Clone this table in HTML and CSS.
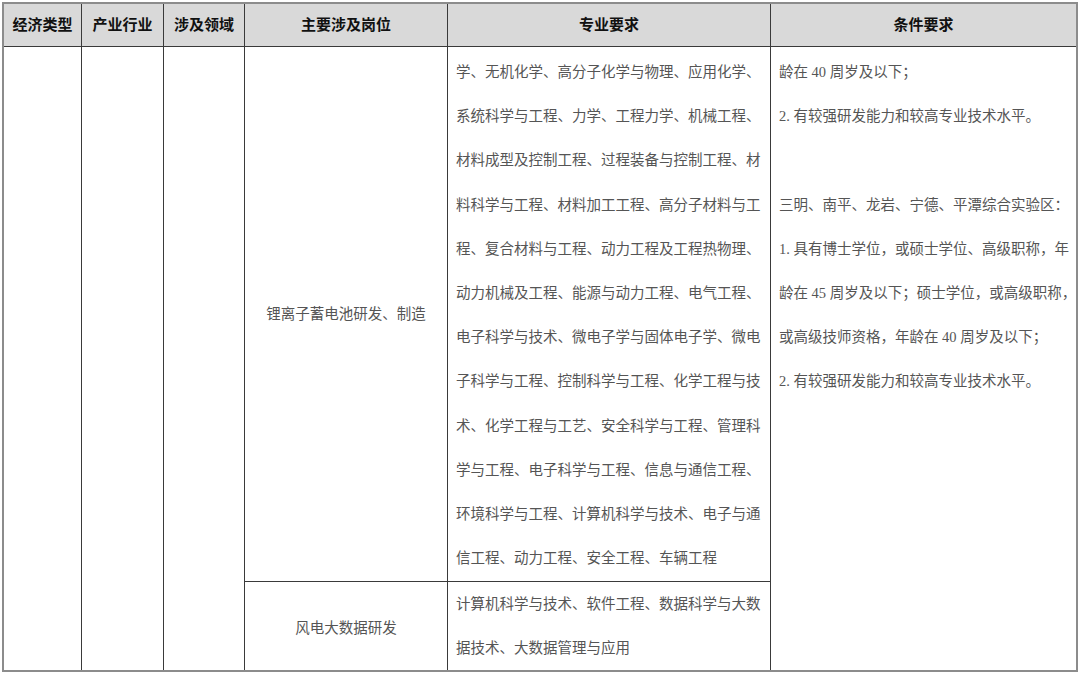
FILE: index.html
```html
<!DOCTYPE html>
<html lang="zh-CN">
<head>
<meta charset="utf-8">
<title>岗位需求表</title>
<link rel="stylesheet" href="styles.css">
</head>
<body>
<table class="req">
  <colgroup>
    <col class="c1"><col class="c2"><col class="c3"><col class="c4"><col class="c5"><col class="c6">
  </colgroup>
  <thead>
    <tr class="head">
      <th>经济类型</th>
      <th>产业行业</th>
      <th>涉及领域</th>
      <th>主要涉及岗位</th>
      <th>专业要求</th>
      <th class="last">条件要求</th>
    </tr>
  </thead>
  <tbody>
    <tr class="r1">
      <td rowspan="2"></td>
      <td rowspan="2"></td>
      <td rowspan="2"></td>
      <td class="post">锂离子蓄电池研发、制造</td>
      <td class="txt">学、无机化学、高分子化学与物理、应用化学、<br>系统科学与工程、力学、工程力学、机械工程、<br>材料成型及控制工程、过程装备与控制工程、材<br>料科学与工程、材料加工工程、高分子材料与工<br>程、复合材料与工程、动力工程及工程热物理、<br>动力机械及工程、能源与动力工程、电气工程、<br>电子科学与技术、微电子学与固体电子学、微电<br>子科学与工程、控制科学与工程、化学工程与技<br>术、化学工程与工艺、安全科学与工程、管理科<br>学与工程、电子科学与工程、信息与通信工程、<br>环境科学与工程、计算机科学与技术、电子与通<br>信工程、动力工程、安全工程、车辆工程</td>
      <td rowspan="2" class="txt cond last">龄在 40 周岁及以下；<br>2. 有较强研发能力和较高专业技术水平。<br>&nbsp;<br>三明、南平、龙岩、宁德、平潭综合实验区：<br>1. 具有博士学位，或硕士学位、高级职称，年<br>龄在 45 周岁及以下；硕士学位，或高级职称，<br>或高级技师资格，年龄在 40 周岁及以下；<br>2. 有较强研发能力和较高专业技术水平。</td>
    </tr>
    <tr class="r2">
      <td class="post">风电大数据研发</td>
      <td class="txt">计算机科学与技术、软件工程、数据科学与大数<br>据技术、大数据管理与应用</td>
    </tr>
  </tbody>
</table>
</body>
</html>
```

FILE: styles.css
```css
* { box-sizing: border-box; }
html, body { margin: 0; padding: 0; background: #ffffff; }
body { padding: 2px 0 0 2px; }

.req {
  width: 1076px;
  table-layout: fixed;
  border-collapse: separate;
  border-spacing: 0;
  border: 2px solid #8c8c8c;
  font-family: "Liberation Serif", "Noto Sans CJK SC", serif;
  color: #555555;
}

.c1 { width: 78px; }
.c2 { width: 82px; }
.c3 { width: 81px; }
.c4 { width: 203px; }
.c5 { width: 323px; }
.c6 { width: 305px; }

.req th, .req td {
  border-right: 1px solid #3a3a3a;
  border-bottom: 1px solid #3a3a3a;
  padding: 0;
}
.req .last { border-right: none; }

.req .head th {
  height: 43px;
  padding-bottom: 3px;
  background: #d9d9d9;
  font-family: "Noto Sans CJK SC", sans-serif;
  font-weight: 700;
  font-size: 15px;
  color: #111111;
  text-align: center;
  vertical-align: middle;
}

.r1 > td { height: 535px; }
.r2 > td { height: 87px; border-bottom: none; }
.req tbody td[rowspan] { border-bottom: none; }

.req td.post {
  text-align: center;
  vertical-align: middle;
  font-size: 14.5px;
  font-family: "Noto Sans CJK SC", sans-serif;
  font-weight: 400;
  color: #555555;
}
.req .r1 td.post { padding-bottom: 3px; }

.req td.txt {
  vertical-align: top;
  text-align: left;
  white-space: nowrap;
  font-size: 14.5px;
  line-height: 44.2px;
  padding: 3px 0 0 8px;
  font-weight: 400;
}
.req .r2 td.txt { padding-top: 0; }
```
